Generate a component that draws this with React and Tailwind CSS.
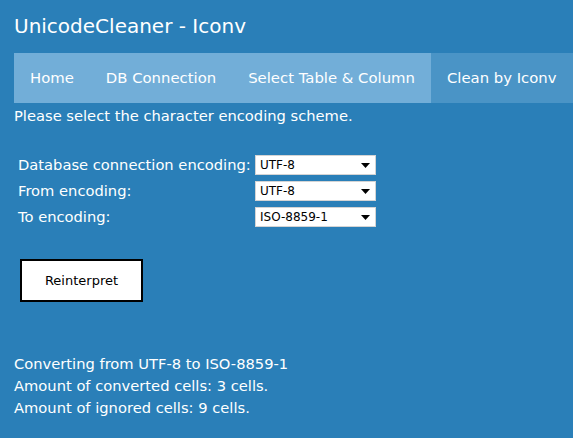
import React from 'react';

const Caret = () => (
  <svg className="w-[9px] h-[5px]" viewBox="0 0 9 5">
    <path d="M0 0h9L4.5 5z" fill="#000" />
  </svg>
);

const FakeSelect = ({ value }) => (
  <div className="flex items-center justify-between w-[121px] h-[20px] bg-white border border-[#d4d4d4] pl-[4px] pr-[5px] text-[12px] text-black">
    <span>{value}</span>
    <Caret />
  </div>
);

export default function App() {
  const rows = [
    { label: 'Database connection encoding:', value: 'UTF-8' },
    { label: 'From encoding:', value: 'UTF-8' },
    { label: 'To encoding:', value: 'ISO-8859-1' },
  ];

  return (
    <div
      className="w-[573px] h-[438px] bg-[#2a7fb8] text-white overflow-hidden"
      style={{ fontFamily: '"DejaVu Sans", Verdana, sans-serif' }}
    >
      {/* Title */}
      <div className="h-[53px] flex items-center px-[14px] pb-[2px]">
        <h1 className="text-[20px]">UnicodeCleaner - Iconv</h1>
      </div>

      {/* Nav */}
      <nav className="ml-[14px] h-[50px] flex bg-[#72aed8] text-[14.85px] whitespace-nowrap">
        <a className="px-4 flex items-center">Home</a>
        <a className="px-4 flex items-center">DB Connection</a>
        <a className="px-4 flex items-center">Select Table &amp; Column</a>
        <a className="px-4 flex items-center flex-1 bg-[#4a94c6]">Clean by Iconv</a>
      </nav>

      <p className="px-[14px] mt-[3px] text-[14.7px] leading-[20px]">
        Please select the character encoding scheme.
      </p>

      {/* Form */}
      <div className="mt-[29px] ml-[18px] flex flex-col gap-[6px] text-[14.7px]">
        {rows.map((r) => (
          <div key={r.label} className="flex items-center h-[20px]">
            <span className="w-[237px] whitespace-nowrap">{r.label}</span>
            <FakeSelect value={r.value} />
          </div>
        ))}
      </div>

      <button className="mt-[32px] ml-[20px] w-[123px] h-[43px] bg-white border-2 border-black text-black text-[13px]">
        Reinterpret
      </button>

      {/* Results */}
      <div className="mt-[51px] px-[14px] text-[14.7px] leading-[22px]">
        <div>Converting from UTF-8 to ISO-8859-1</div>
        <div>Amount of converted cells: 3 cells.</div>
        <div>Amount of ignored cells: 9 cells.</div>
      </div>
    </div>
  );
}
